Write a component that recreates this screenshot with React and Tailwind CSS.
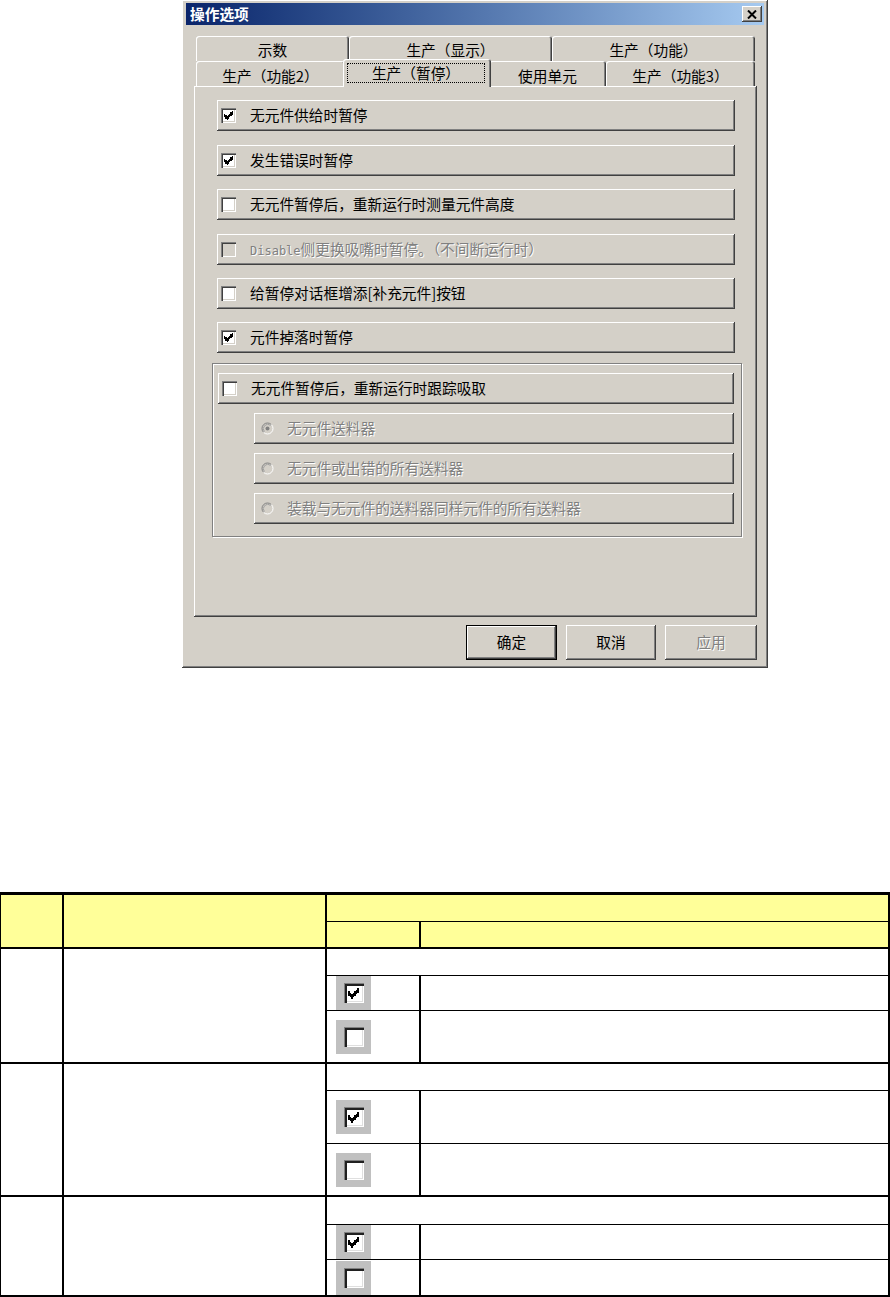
import React from "react";

const FONT = "font-['Noto_Sans_CJK_SC','Noto_Sans',sans-serif]";
const RAISED =
  "shadow-[inset_-1px_-1px_#404040,inset_1px_1px_#ffffff,inset_-2px_-2px_#808080,inset_2px_2px_#d4d0c8]";
const SUNKEN =
  "shadow-[inset_1px_1px_#808080,inset_2px_2px_#404040,inset_-1px_-1px_#ffffff,inset_-2px_-2px_#d4d0c8]";
const TAB =
  "rounded-t-[3px] shadow-[inset_1px_1px_#ffffff,inset_-1px_0_#404040,inset_-2px_0_#808080]";
const DISABLED_TEXT = "text-[#808080] [text-shadow:1px_1px_0_#ffffff]";

const CheckMark = ({ size = 9 }) => (
  <svg width={size} height={size} viewBox="0 0 7 7" shapeRendering="crispEdges">
    <path
      d="M0 2h1v3H0z M1 3h1v3H1z M2 4h1v3H2z M3 3h1v3H3z M4 2h1v3H4z M5 1h1v3H5z M6 0h1v3H6z"
      fill="#000"
    />
  </svg>
);

const Check = ({ checked, disabled }) => (
  <span
    className={`flex h-[15px] w-[15px] shrink-0 items-center justify-center ${
      disabled ? "bg-[#d4d0c8]" : "bg-white"
    } ${SUNKEN}`}
  >
    {checked && <CheckMark />}
  </span>
);

// disabled radio: dark arc top-left, white arc bottom-right
const Radio = ({ selected }) => (
  <svg width="13" height="13" viewBox="0 0 13 13" className="shrink-0">
    <circle cx="6.5" cy="6.5" r="5.5" fill="#d4d0c8" />
    <path d="M10.4 2.6 A5.5 5.5 0 0 0 2.6 10.4" fill="none" stroke="#808080" strokeWidth="1" />
    <path d="M2.6 10.4 A5.5 5.5 0 0 0 10.4 2.6" fill="none" stroke="#ffffff" strokeWidth="1" />
    <path d="M9.6 3.4 A4.4 4.4 0 0 0 3.4 9.6" fill="none" stroke="#a0a0a0" strokeWidth="1" />
    {selected && <circle cx="6.5" cy="6.5" r="2" fill="#808080" />}
  </svg>
);

const OptionRow = ({ label, checked, disabled, className = "" }) => (
  <div className={`flex h-[31px] items-center bg-[#d4d0c8] ${RAISED} ${className}`}>
    <span className="ml-[4px]">
      <Check checked={checked} disabled={disabled} />
    </span>
    <span className={`ml-[14px] text-[14.7px] leading-none ${disabled ? DISABLED_TEXT : "text-black"}`}>
      {label}
    </span>
  </div>
);

const RadioRow = ({ label, selected }) => (
  <div className={`ml-[36px] mt-[9px] flex h-[31px] w-[480px] items-center ${RAISED}`}>
    <span className="ml-[7px] flex">
      <Radio selected={selected} />
    </span>
    <span className={`ml-[13px] text-[14.7px] leading-none ${DISABLED_TEXT}`}>{label}</span>
  </div>
);

const Tab = ({ width, children }) => (
  <div className={`flex h-full items-center justify-center pt-[3px] text-[14.7px] ${width} ${TAB}`}>
    {children}
  </div>
);

const options = [
  { label: "无元件供给时暂停", checked: true, mt: "" },
  { label: "发生错误时暂停", checked: true, mt: "mt-[14px]" },
  { label: "无元件暂停后，重新运行时测量元件高度", checked: false, mt: "mt-[13px]" },
  {
    label: (
      <>
        <span className="font-['DejaVu_Sans_Mono',monospace] text-[12px]">Disable</span>
        侧更换吸嘴时暂停。（不间断运行时）
      </>
    ),
    disabled: true,
    mt: "mt-[14px]",
  },
  { label: "给暂停对话框增添[补充元件]按钮", checked: false, mt: "mt-[13px]" },
  { label: "元件掉落时暂停", checked: true, mt: "mt-[13px]" },
];

const radios = [
  { label: "无元件送料器", selected: true },
  { label: "无元件或出错的所有送料器" },
  { label: "装载与无元件的送料器同样元件的所有送料器" },
];

const Dialog = () => (
  <div className={`ml-[182px] flex h-[668px] w-[586px] flex-col bg-[#d4d0c8] px-[4px] pt-[3px] ${RAISED}`}>
    {/* Title bar */}
    <div className="flex h-[22px] items-center justify-between bg-gradient-to-r from-[#0a246a] to-[#a6caf0] pl-[4px] pr-[2px]">
      <span className="text-[14.7px] font-bold leading-none text-white">操作选项</span>
      <span className={`flex h-[16px] w-[20px] items-center justify-center bg-[#d4d0c8] ${RAISED}`}>
        <svg width="10" height="9" viewBox="0 0 10 9">
          <path d="M1 0.5 L9 8.5 M9 0.5 L1 8.5" stroke="#000" strokeWidth="2" />
        </svg>
      </span>
    </div>

    {/* Tabs */}
    <div className="ml-[10px] mt-[11px] flex h-[25px] w-[559px]">
      <Tab width="w-[153px]">示数</Tab>
      <Tab width="w-[203px]">生产（显示）</Tab>
      <Tab width="w-[203px]">生产（功能）</Tab>
    </div>
    <div className="ml-[10px] flex h-[25px] w-[559px] items-start">
      <Tab width="w-[149px]">
        <span className="pt-[2px]">生产（功能2）</span>
      </Tab>
      <div className={`relative z-10 -mx-[2px] -mt-[2px] flex h-[28px] w-[148px] bg-[#d4d0c8] p-[4px] pr-[6px] ${TAB}`}>
        <div className="flex flex-1 items-center justify-center border border-dotted border-black text-[14.7px] leading-none">
          生产（暂停）
        </div>
      </div>
      <Tab width="w-[117px]">
        <span className="pt-[2px]">使用单元</span>
      </Tab>
      <Tab width="w-[149px]">
        <span className="pt-[2px]">生产（功能3）</span>
      </Tab>
    </div>

    {/* Panel */}
    <div className={`ml-[8px] h-[531px] w-[563px] pl-[18px] pt-[14px] ${RAISED}`}>
      {options.map((o, i) => (
        <OptionRow
          key={i}
          label={o.label}
          checked={o.checked}
          disabled={o.disabled}
          className={`ml-[5px] w-[518px] ${o.mt}`}
        />
      ))}

      <div className="mt-[10px] h-[174px] w-[530px] border border-[#808080] pl-[5px] pt-[9px] shadow-[inset_1px_1px_#ffffff,1px_1px_#ffffff]">
        <OptionRow label="无元件暂停后，重新运行时跟踪吸取" className="w-[516px]" />
        {radios.map((r, i) => (
          <RadioRow key={i} label={r.label} selected={r.selected} />
        ))}
      </div>
    </div>

    {/* Buttons */}
    <div className="ml-[8px] mt-[8px] flex w-[563px] justify-end gap-[9px]">
      <div className="h-[35px] w-[91px] border border-black">
        <div className={`flex h-full items-center justify-center text-[14.7px] ${RAISED}`}>确定</div>
      </div>
      <div className={`flex h-[35px] w-[90px] items-center justify-center text-[14.7px] ${RAISED}`}>取消</div>
      <div className={`flex h-[35px] w-[92px] items-center justify-center text-[14.7px] ${RAISED} ${DISABLED_TEXT}`}>
        应用
      </div>
    </div>
  </div>
);

const TableCheck = ({ checked }) => (
  <div className="flex h-[34px] w-[35px] items-start justify-center bg-[#c0c0c0] pt-[7px]">
    <span className="flex h-[20px] w-[20px] items-center justify-center bg-white shadow-[inset_1px_1px_#808080,inset_3px_3px_#202020,inset_-1px_-1px_#ffffff,inset_-2px_-2px_#dfdfdf]">
      {checked && <CheckMark size={11} />}
    </span>
  </div>
);

const groups = [
  [{ checked: true }, { checked: false, last: true }],
  [{ checked: true }, { checked: false, last: true }],
  [{ checked: true }, { checked: false, last: true }],
];

const SpecTable = () => (
  <div className="mt-[224px] grid w-[890px] grid-cols-[63px_263px_94px_1fr] grid-rows-[27px_27px_27px_35px_53px_27px_53px_53px_28px_35px_37px] border-l border-t-[3px] border-black">
    {/* Header */}
    <div className="row-span-2 border-b-2 border-r-2 border-black bg-[#ffff99]" />
    <div className="row-span-2 border-b-2 border-r-2 border-black bg-[#ffff99]" />
    <div className="col-span-2 border-b border-r-2 border-black bg-[#ffff99]" />
    <div className="border-b-2 border-r-2 border-black bg-[#ffff99]" />
    <div className="border-b-2 border-r-2 border-black bg-[#ffff99]" />

    {groups.map((rows, g) => (
      <React.Fragment key={g}>
        <div className="row-span-3 border-b-2 border-r-2 border-black" />
        <div className="row-span-3 border-b-2 border-r-2 border-black" />
        <div className="col-span-2 border-b border-r-2 border-black" />
        {rows.map((r, i) => (
          <React.Fragment key={i}>
            <div className={`flex items-center border-r-2 border-black pl-[9px] ${r.last ? "border-b-2" : "border-b"}`}>
              <TableCheck checked={r.checked} />
            </div>
            <div className={`border-r-2 border-black ${r.last ? "border-b-2" : "border-b"}`} />
          </React.Fragment>
        ))}
      </React.Fragment>
    ))}
  </div>
);

export default function App() {
  return (
    <div className={`h-[1297px] w-[890px] overflow-hidden bg-white ${FONT}`}>
      <Dialog />
      <SpecTable />
    </div>
  );
}
